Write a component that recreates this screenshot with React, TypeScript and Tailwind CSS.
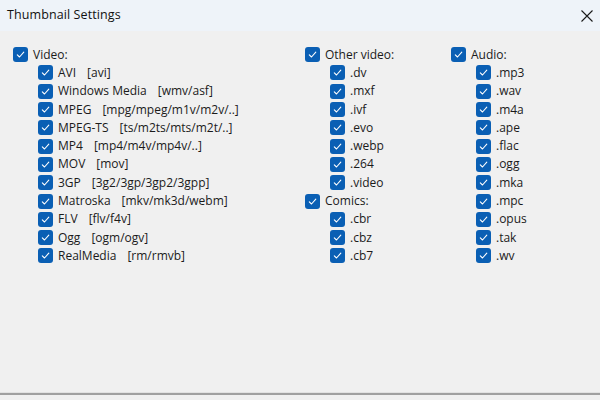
import React from "react";

const font = { fontFamily: '"Open Sans", "Noto Sans", sans-serif' };

function Box() {
  return (
    <span className="flex h-[15px] w-[15px] shrink-0 items-center justify-center rounded-[3px] bg-[#0a5fb4]">
      <svg width="11" height="11" viewBox="0 0 11 11" fill="none">
        <path d="M2.3 5.8 L4.5 8 L8.8 3.2" stroke="white" strokeWidth="1.1" strokeLinecap="round" strokeLinejoin="round" />
      </svg>
    </span>
  );
}

function Row({ label, ext, child }: { label: string; ext?: string; child?: boolean }) {
  return (
    <div className={`flex h-[18.3px] items-center gap-[5px] ${child ? "pl-[25px]" : ""}`}>
      <Box />
      <span className="whitespace-pre text-[12px] leading-none text-[#1b1b1b]">
        {label}
        {ext && <span className="ml-[11px]">{ext}</span>}
      </span>
    </div>
  );
}

const video: [string, string][] = [
  ["AVI", "[avi]"],
  ["Windows Media", "[wmv/asf]"],
  ["MPEG", "[mpg/mpeg/m1v/m2v/..]"],
  ["MPEG-TS", "[ts/m2ts/mts/m2t/..]"],
  ["MP4", "[mp4/m4v/mp4v/..]"],
  ["MOV", "[mov]"],
  ["3GP", "[3g2/3gp/3gp2/3gpp]"],
  ["Matroska", "[mkv/mk3d/webm]"],
  ["FLV", "[flv/f4v]"],
  ["Ogg", "[ogm/ogv]"],
  ["RealMedia", "[rm/rmvb]"],
];
const other = [".dv", ".mxf", ".ivf", ".evo", ".webp", ".264", ".video"];
const comics = [".cbr", ".cbz", ".cb7"];
const audio = [".mp3", ".wav", ".m4a", ".ape", ".flac", ".ogg", ".mka", ".mpc", ".opus", ".tak", ".wv"];

export default function App() {
  return (
    <div className="flex h-[400px] w-[600px] flex-col bg-[#f0f0f0]" style={font}>
      <div className="flex h-[31px] shrink-0 items-center justify-between bg-[#eef3f9] pl-[7px] pr-[7px]">
        <span className="text-[12.5px] tracking-[0.1px] text-[#111]">Thumbnail Settings</span>
        <svg width="12" height="12" viewBox="0 0 12 12">
          <path d="M0.5 0.5 L11.5 11.5 M11.5 0.5 L0.5 11.5" stroke="#1a1a1a" strokeWidth="1.1" />
        </svg>
      </div>
      <div className="flex flex-1 pl-[13px] pt-[14.5px]">
        <div className="w-[292px]">
          <Row label="Video:" />
          {video.map(([l, e]) => (
            <Row key={l} label={l} ext={e} child />
          ))}
        </div>
        <div className="w-[146px]">
          <Row label="Other video:" />
          {other.map((v) => (
            <Row key={v} label={v} child />
          ))}
          <Row label="Comics:" />
          {comics.map((v) => (
            <Row key={v} label={v} child />
          ))}
        </div>
        <div>
          <Row label="Audio:" />
          {audio.map((v) => (
            <Row key={v} label={v} child />
          ))}
        </div>
      </div>
      <div className="h-[1px] bg-[#e2e2e2]" />
      <div className="h-[2px] bg-[#a0a0a0]" />
      <div className="h-[5px] bg-[#f0f0f0]" />
    </div>
  );
}
